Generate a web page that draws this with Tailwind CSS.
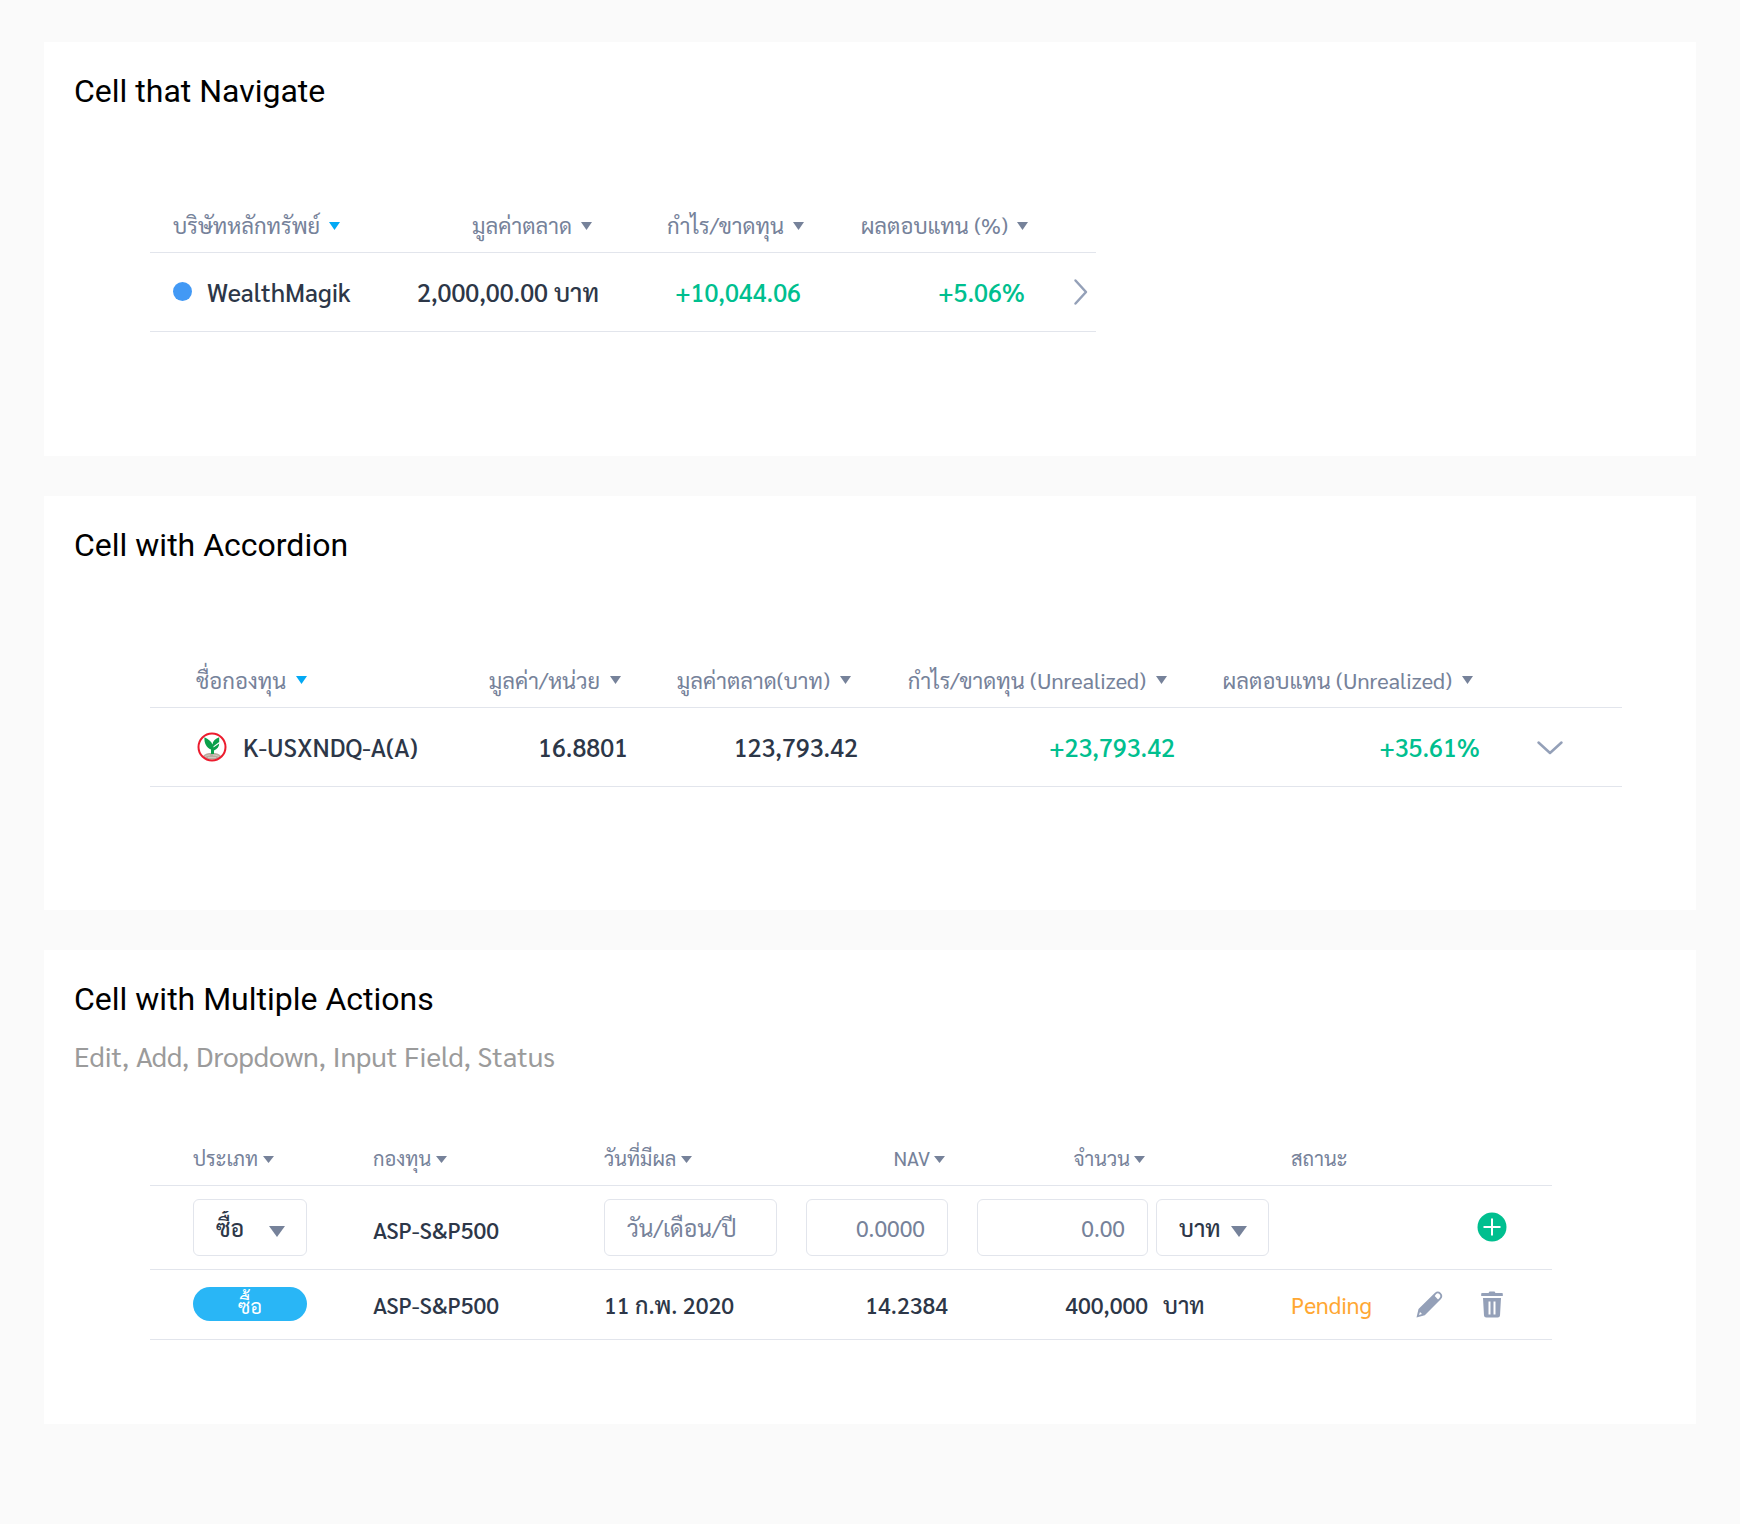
<!DOCTYPE html>
<html lang="th">
<head>
<meta charset="utf-8">
<meta name="viewport" content="width=device-width, initial-scale=1">
<title>Table cells</title>
<script src="https://cdn.jsdelivr.net/npm/@tailwindcss/browser@4"></script>
</head>
<body class="min-h-screen bg-[#fafafa] font-['Sarabun','Roboto','Noto_Sans_Thai_Looped','Loma','Noto_Sans_Thai','Noto_Sans',sans-serif] text-[#2d3748]">
<svg class="hidden" aria-hidden="true">
  <symbol id="caret" viewBox="0 0 11 8" preserveAspectRatio="none"><path d="M0 0h11L5.500 8z" fill="currentColor"/></symbol>
</svg>
<main class="flex flex-col gap-10 px-11 pt-[42px] pb-[100px]">

  <section class="bg-white px-[30px] pt-[25px] pb-[124px]">
    <h2 class="font-['Roboto',sans-serif] text-[32px] leading-[48px] text-black">Cell that Navigate</h2>
    <div class="mt-[79px] pl-[76px]">
      <table class="w-full max-w-[946px] table-fixed border-collapse">
        <colgroup><col class="w-[250px]"><col class="w-[199px]"><col class="w-[205px]"><col class="w-[224px]"><col></colgroup>
        <thead>
          <tr class="h-[58px] border-b border-[#e2e5ec] text-[22px] text-[#76829a]">
            <th class="p-0 pt-1.5 pl-[23px] text-left font-normal"><button class="inline-flex items-center gap-[9px] whitespace-nowrap">บริษัทหลักทรัพย์<svg class="h-2 w-[11px] text-[#03a9f4]"><use href="#caret"/></svg></button></th>
            <th class="p-0 pt-1.5 pr-[7px] text-right font-normal"><button class="inline-flex items-center gap-[9px] whitespace-nowrap">มูลค่าตลาด<svg class="h-2 w-[11px]"><use href="#caret"/></svg></button></th>
            <th class="p-0 pt-1.5 text-right font-normal"><button class="inline-flex items-center gap-[9px] whitespace-nowrap">กำไร/ขาดทุน<svg class="h-2 w-[11px]"><use href="#caret"/></svg></button></th>
            <th class="p-0 pt-1.5 text-right font-normal"><button class="inline-flex items-center gap-[9px] whitespace-nowrap">ผลตอบแทน (%)<svg class="h-2 w-[11px]"><use href="#caret"/></svg></button></th>
            <th class="p-0"></th>
          </tr>
        </thead>
        <tbody>
          <tr class="h-[79px] border-b border-[#e2e5ec] text-[25px] leading-8 font-medium whitespace-nowrap">
            <td class="p-0 pl-[23px]"><span class="flex items-center gap-[15px]"><span class="size-[19px] rounded-full bg-[#4299f5]"></span><span>WealthMagik</span></span></td>
            <td class="p-0 text-right">2,000,00.00 บาท</td>
            <td class="p-0 pr-[3px] text-right text-[#00bf8f]">+10,044.06</td>
            <td class="p-0 pr-[3px] text-right text-[#00bf8f]">+5.06%</td>
            <td class="p-0 pr-2"><a href="#" aria-label="WealthMagik" class="flex justify-end"><svg class="h-[28px] w-[15px]" viewBox="0 0 15 28" fill="none" stroke="#94a0b8" stroke-width="2.500" stroke-linecap="round" stroke-linejoin="round"><path d="M2.500 2.500l10.500 11.500L2.500 25.500"/></svg></a></td>
          </tr>
        </tbody>
      </table>
    </div>
  </section>

  <section class="bg-white px-[30px] pt-[25px] pb-[123px]">
    <h2 class="font-['Roboto',sans-serif] text-[32px] leading-[48px] text-black">Cell with Accordion</h2>
    <div class="mt-[81px] pl-[76px]">
      <table class="w-full max-w-[1472px] table-fixed border-collapse">
        <colgroup><col class="w-[310px]"><col class="w-[168px]"><col class="w-[230px]"><col class="w-[317px]"><col class="w-[305px]"><col></colgroup>
        <thead>
          <tr class="h-[58px] border-b border-[#e2e5ec] text-[22px] text-[#76829a]">
            <th class="p-0 pt-1 pl-[46px] text-left font-normal"><button class="inline-flex items-center gap-[10px] whitespace-nowrap">ชื่อกองทุน<svg class="h-2 w-[11px] text-[#03a9f4]"><use href="#caret"/></svg></button></th>
            <th class="p-0 pt-1 pr-[7px] text-right font-normal"><button class="inline-flex items-center gap-[10px] whitespace-nowrap">มูลค่า/หน่วย<svg class="h-2 w-[11px]"><use href="#caret"/></svg></button></th>
            <th class="p-0 pt-1 pr-[7px] text-right font-normal"><button class="inline-flex items-center gap-[10px] whitespace-nowrap">มูลค่าตลาด(บาท)<svg class="h-2 w-[11px]"><use href="#caret"/></svg></button></th>
            <th class="p-0 pt-1 pr-2 text-right font-normal"><button class="inline-flex items-center gap-[10px] whitespace-nowrap">กำไร/ขาดทุน (Unrealized)<svg class="h-2 w-[11px]"><use href="#caret"/></svg></button></th>
            <th class="p-0 pt-1 pr-[7px] text-right font-normal"><button class="inline-flex items-center gap-[10px] whitespace-nowrap">ผลตอบแทน (Unrealized)<svg class="h-2 w-[11px]"><use href="#caret"/></svg></button></th>
            <th class="p-0"></th>
          </tr>
        </thead>
        <tbody>
          <tr class="h-[79px] border-b border-[#e2e5ec] text-[25px] leading-8 font-medium whitespace-nowrap">
            <td class="p-0 pl-[47px]"><span class="flex items-center gap-4">
              <svg class="size-[30px]" viewBox="0 0 30 30">
                <circle cx="15" cy="15" r="13.500" fill="#fff"/>
                <path d="M6 24c2-2.500 5-3 9-3s7 .5 9 3c-3 3-6 3.500-9 3.500S9 27 6 24z" fill="#b9aca0"/>
                <path d="M8 24.500c2-1 3.500-1.500 5-1.500M16 23c2 0 4 .5 6 1.500M11 25.500h8" stroke="#e4ddd6" stroke-width=".6" fill="none"/>
                <path d="M14 22v-4.500C9.500 15.500 7.200 12 7.400 5.300c4 2 7 4 8 7.200.5-3.500 3-5.700 6.800-7.200V10l-5.700 4.200v1.200l5.700-4c0 3.200-2 5.600-5.200 7V22z" fill="#0aa04b"/>
                <circle cx="15" cy="15" r="13.500" fill="none" stroke="#ec1c2e" stroke-width="2"/>
              </svg><span>K-USXNDQ-A(A)</span></span></td>
            <td class="p-0 text-right">16.8801</td>
            <td class="p-0 text-right">123,793.42</td>
            <td class="p-0 text-right text-[#00bf8f]">+23,793.42</td>
            <td class="p-0 text-right text-[#00bf8f]">+35.61%</td>
            <td class="p-0 pl-14"><button aria-label="Expand" class="flex"><svg class="h-[15px] w-[28px]" viewBox="0 0 28 15" fill="none" stroke="#94a0b8" stroke-width="2.500" stroke-linecap="round" stroke-linejoin="round"><path d="M2.500 2.500l11.500 10.500L25.500 2.500"/></svg></button></td>
          </tr>
        </tbody>
      </table>
    </div>
  </section>

  <section class="bg-white px-[30px] pt-[25px] pb-[84px]">
    <h2 class="font-['Roboto',sans-serif] text-[32px] leading-[48px] text-black">Cell with Multiple Actions</h2>
    <p class="mt-3 text-[28px] leading-10 text-[#9b9b9b]">Edit, Add, Dropdown, Input Field, Status</p>
    <div class="mt-[50px] pl-[76px]">
      <table class="w-full max-w-[1402px] table-fixed border-collapse">
        <colgroup><col class="w-[223px]"><col class="w-[231px]"><col class="w-[202px]"><col class="w-[142px]"><col class="w-[200px]"><col class="w-[143px]"><col class="w-[125px]"><col></colgroup>
        <thead>
          <tr class="h-[60px] border-b border-[#e2e5ec] text-xl text-[#76829a]">
            <th class="p-0 pt-1.5 pl-[43px] text-left font-normal"><button class="inline-flex items-center gap-[5px] whitespace-nowrap">ประเภท<svg class="mt-1 h-[7px] w-[11px]"><use href="#caret"/></svg></button></th>
            <th class="p-0 pt-1.5 text-left font-normal"><button class="inline-flex items-center gap-[5px] whitespace-nowrap">กองทุน<svg class="mt-1 h-[7px] w-[11px]"><use href="#caret"/></svg></button></th>
            <th class="p-0 pt-1.5 text-left font-normal"><button class="inline-flex items-center gap-[5px] whitespace-nowrap">วันที่มีผล<svg class="mt-1 h-[7px] w-[11px]"><use href="#caret"/></svg></button></th>
            <th class="p-0 pt-1.5 pr-[3px] text-right font-normal"><button class="inline-flex items-center gap-1 whitespace-nowrap">NAV<svg class="mt-1 h-[7px] w-[11px]"><use href="#caret"/></svg></button></th>
            <th class="p-0 pt-1.5 pr-[3px] text-right font-normal"><button class="inline-flex items-center gap-1 whitespace-nowrap">จำนวน<svg class="mt-1 h-[7px] w-[11px]"><use href="#caret"/></svg></button></th>
            <th class="p-0"></th>
            <th class="p-0 pt-1.5 text-left font-normal">สถานะ</th>
            <th class="p-0"></th>
          </tr>
        </thead>
        <tbody class="text-[23px] leading-8 whitespace-nowrap">
          <tr class="h-[84px] border-b border-[#e2e5ec]">
            <td class="p-0 pl-[43px]">
              <div class="relative w-[114px]">
                <select aria-label="ประเภท" class="block h-[57px] w-full appearance-none rounded-md border border-[#e2e5ec] bg-white pl-[22px] font-medium"><option>ซื้อ</option><option>ขาย</option></select>
                <svg class="pointer-events-none absolute top-[27px] right-[22px] h-[11px] w-4 text-[#76829a]"><use href="#caret"/></svg>
              </div>
            </td>
            <td class="p-0 pt-1 font-medium">ASP-S&amp;P500</td>
            <td class="p-0"><input aria-label="วันที่มีผล" placeholder="วัน/เดือน/ปี" class="block h-[57px] w-[173px] rounded-md border border-[#e2e5ec] bg-white px-[22px] placeholder:text-[#76829a]"></td>
            <td class="p-0"><input aria-label="NAV" placeholder="0.0000" class="block h-[57px] w-full rounded-md border border-[#e2e5ec] bg-white px-[22px] text-right placeholder:text-[#76829a]"></td>
            <td class="p-0 pl-[29px]"><input aria-label="จำนวน" placeholder="0.00" class="block h-[57px] w-full rounded-md border border-[#e2e5ec] bg-white px-[22px] text-right placeholder:text-[#76829a]"></td>
            <td class="p-0 pl-2">
              <div class="relative w-[113px]">
                <select aria-label="หน่วย" class="block h-[57px] w-full appearance-none rounded-md border border-[#e2e5ec] bg-white pl-[22px] font-medium"><option>บาท</option><option>หน่วย</option></select>
                <svg class="pointer-events-none absolute top-[27px] right-[22px] h-[11px] w-4 text-[#76829a]"><use href="#caret"/></svg>
              </div>
            </td>
            <td class="p-0"></td>
            <td class="p-0 pr-[45px]"><button aria-label="Add" class="ml-auto flex"><svg class="size-[30px]" viewBox="0 0 30 30"><circle cx="15" cy="15" r="14.500" fill="#00bf8f"/><path d="M15 6.500v17M6.500 15h17" stroke="#fff" stroke-width="2"/></svg></button></td>
          </tr>
          <tr class="h-[70px] border-b border-[#e2e5ec] font-medium">
            <td class="p-0 pl-[43px]"><span class="flex h-[34px] w-[114px] items-center justify-center rounded-full bg-[#29b6f6] pt-1 text-xl font-normal text-white">ซื้อ</span></td>
            <td class="p-0">ASP-S&amp;P500</td>
            <td class="p-0">11 ก.พ. 2020</td>
            <td class="p-0 text-right">14.2384</td>
            <td class="p-0 text-right">400,000</td>
            <td class="p-0 pl-[15px]">บาท</td>
            <td class="p-0 font-normal text-[#ffa733]">Pending</td>
            <td class="p-0 pr-[49px]"><div class="flex items-center justify-end gap-[38px]">
              <button aria-label="Edit" class="flex"><svg class="size-[27px]" viewBox="0 0 27 27" fill="#94a0b8"><path fill-rule="evenodd" d="M.5 26.500L2.500 18 19 1.800c2-1.800 4-1.500 5.800.2 1.900 1.800 2 4 .2 5.900L8.800 24.200zM3 24l3-.9-2-2.100zM18.700 4.900l3.300 3.500 1.500-1.500c1.600-1.600.7-3.100-.2-3.900-1-.9-2.200-.9-3.300.2z"/></svg></button>
              <button aria-label="Delete" class="flex"><svg class="h-[27px] w-[22px]" viewBox="0 0 22 27" fill="#94a0b8"><path fill-rule="evenodd" d="M1 2h6.500l1-1.500h5l1 1.500H21q.8 0 .8.800V5H.2V2.800Q.2 2 1 2zM2 7h18l-1 17.500q-.2 2-2.200 2H5.200q-2 0-2.200-2zM7.500 10.500v13h2v-13zM12.500 10.500v13h2v-13z"/></svg></button>
            </div></td>
          </tr>
        </tbody>
      </table>
    </div>
  </section>
</main>
</body>
</html>
